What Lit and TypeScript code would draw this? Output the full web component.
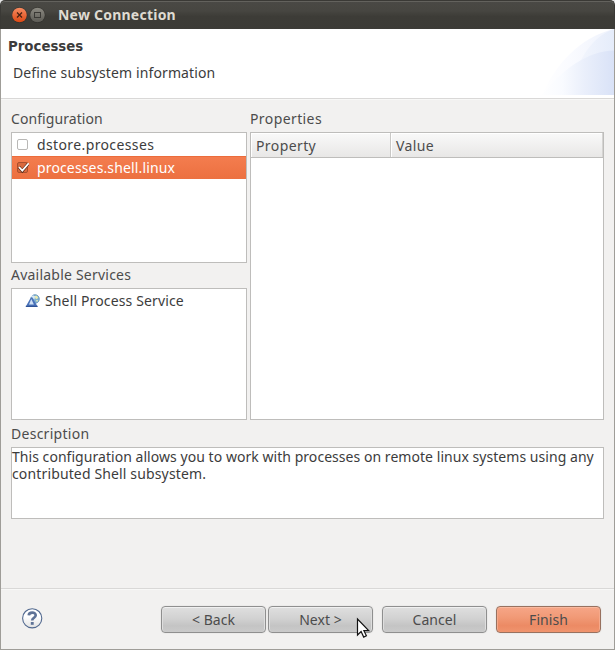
import { LitElement, html, css, svg } from "lit";
import { customElement, property } from "lit/decorators.js";
import { classMap } from "lit/directives/class-map.js";

@customElement("title-bar")
class TitleBar extends LitElement {
  static styles = css`
    :host { display: flex; align-items: center; height: 29px; box-sizing: border-box; padding-left: 11px;
      border-radius: 5px 5px 0 0; border: 1px solid #3a3935; border-bottom: 0;
      box-shadow: inset 0 1px #63625d;
      background: linear-gradient(#4a4945 0, #474641 35%, #3d3c37 55%, #3c3b37 100%); }
    svg { display: block; margin-right: 2px; }
    .title { margin-left: 10px; color: #dfdbd2; font: bold 14px/20px "Noto Sans", sans-serif; letter-spacing: 0.23px; white-space: nowrap; }
  `;
  render() {
    return html`
      <svg width="16" height="17" viewBox="0 0 16 17">
        <defs><linearGradient id="c" x2="0" y2="1"><stop stop-color="#f68b61" /><stop offset="1" stop-color="#dd4814" /></linearGradient></defs>
        <circle cx="7.5" cy="8.2" r="7.9" fill="#33322e" />
        <circle cx="7.5" cy="8" r="7.3" fill="url(#c)" />
        <path d="M5 5.5l5 5m0-5l-5 5" stroke="#492112" stroke-width="1.3" />
      </svg>
      <svg width="16" height="17" viewBox="0 0 16 17">
        <defs><linearGradient id="m" x2="0" y2="1"><stop stop-color="#8b8981" /><stop offset="1" stop-color="#5c5b55" /></linearGradient></defs>
        <circle cx="7.5" cy="8.2" r="7.9" fill="#33322e" />
        <circle cx="7.5" cy="8" r="7.3" fill="url(#m)" />
        <rect x="4.5" y="5.5" width="6" height="5" fill="none" stroke="#3a3935" />
      </svg>
      <span class="title">New Connection</span>`;
  }
}

@customElement("dialog-button")
class DialogButton extends LitElement {
  @property() label = "";
  @property({ type: Boolean }) primary = false;
  static styles = css`
    :host { display: block; width: 105px; height: 27px; }
    .face { box-sizing: border-box; width: 105px; height: 27px; border: 1px solid #8f8f8f; border-radius: 4px;
      display: flex; align-items: center; justify-content: center;
      font: 14px/20px "Noto Sans", sans-serif; color: #4c4c4c; white-space: nowrap; letter-spacing: .06px;
      background: linear-gradient(#dfdfdf, #d2d2d2 45%, #c4c4c4 75%, #cacaca);
      box-shadow: inset 0 1px #f0f0f0, inset 1px 0 #dedede, inset -1px 0 #dedede, 0 0 0 1px rgba(0,0,0,.025); }
    .primary { border-color: #98715f;
      background: linear-gradient(#f6a687, #f19a77 40%, #ec8a64 75%, #f0946e);
      box-shadow: inset 0 1px #fab99f, inset 1px 0 #f5a98b, inset -1px 0 #f5a98b, 0 0 0 1px rgba(0,0,0,.025); }
  `;
  render() {
    return html`<div class=${classMap({ face: true, primary: this.primary })}>${this.label}</div>`;
  }
}

const serviceIcon = svg`
  <circle cx="10" cy="5" r="4.3" fill="#7fb0d0" stroke="#5d8fb8" stroke-width=".8" />
  <path d="M9 2l3-.3 1.3 2.3-2.3 1.3zM11 6l2.2.3-1.2 2z" fill="#e9ebb0" />
  <path d="M5.5 2.5l2.5-1.3 2 1.4-.5 3z" fill="#d7e9f7" />
  <path d="M.8 12.6L5 5l2-2 2 3.5 3.6 6.1z" fill="#4a72b8" />
  <path d="M4 10.5L6.3 5l2.6 5.5z" fill="#cfe0f5" />
  <path d="M.8 12.4h11.8" stroke="#2f5296" stroke-width="1.2" />`;

@customElement("app-root")
class AppRoot extends LitElement {
  static styles = css`
    :host { display: block; width: 615px; height: 650px; position: relative; background: #e6e6e6; overflow: hidden;
      font: 14px/17px "Noto Sans", sans-serif; color: #3c3c3c; white-space: nowrap; }
    .window { display: flex; flex-direction: column; height: 650px; }
    .body { flex: 1; display: flex; flex-direction: column; border: 1px solid #9f9d98; border-top: 0; background: #f2f1f0; }
    .head { position: relative; height: 70px; box-sizing: border-box; background: #fff; border-bottom: 1px solid #d9d8d7; padding: 9px 0 0 7px; }
    .head h1 { margin: 0; font: bold 13.33px/17px "DejaVu Sans", sans-serif; }
    .head p { margin: 9px 0 0 5px; line-height: 17px; letter-spacing: .12px; }
    .swoosh { position: absolute; right: 0; top: 0; }
    .main { height: 490px; box-sizing: border-box; padding: 11px 10px 0; color: #4c4c4c;
      border-top: 1px solid #f8f8f7; border-bottom: 1px solid #d9d8d7; }
    .cols { display: flex; gap: 3px; }
    .left { width: 236px; }
    .right { width: 354px; }
    .label { height: 17px; margin-bottom: 4px; line-height: 16px; }
    .box { box-sizing: border-box; border: 1px solid #bebdbb; background: #fff; color: #3c3c3c; }
    .config { height: 131px; margin-bottom: 4px; }
    .services { height: 132px; }
    .props { height: 288px; }
    .row { display: flex; align-items: center; height: 23px; padding-left: 5px; gap: 8px; }
    .selected { color: #fff; background: linear-gradient(#f47d4f, #ec7040); box-shadow: inset 0 1px #ec6c3b; }
    .row svg, .service svg { display: block; flex: none; }
    .service { display: flex; align-items: center; height: 23px; padding-left: 13px; gap: 5px; }
    .cells { display: flex; height: 24px; border-bottom: 1px solid #bebdbb; color: #4c4c4c; line-height: 25px; background: linear-gradient(#f9f9f9, #e8e7e6); }
    .cell { padding-left: 5px; box-sizing: border-box; box-shadow: inset 1px 1px #fff; }
    .c1 { width: 140px; border-right: 1px solid #c9c8c6; }
    .c2 { flex: 1; border-right: 1px solid #d5d4d2; }
    .t-conf { letter-spacing: .08px; }
    .t-row { letter-spacing: .38px; }
    .t-row-selected, .t-service { letter-spacing: .14px; }
    .t-available { letter-spacing: .22px; }
    .t-props { letter-spacing: .4px; }
    .t-desc { letter-spacing: .27px; }
    .desc-label { margin: 6px 0 4px; }
    .desc { height: 72px; width: 593px; white-space: normal; letter-spacing: .14px; }
    .desc::first-line { letter-spacing: .045px; }
    .foot { flex: 1; display: flex; padding: 16px 0 0 21px; border-top: 1px solid #f8f8f7; }
    .help { display: block; margin: 2px 118px 0 0; }
    .next { margin-left: 2px; }
    .cancel { margin-left: 9px; }
    .finish { margin-left: 9px; }
    .cursor { position: absolute; left: 356px; top: 617px; }
  `;
  render() {
    return html`
      <div class="window">
        <title-bar></title-bar>
        <div class="body">
          <div class="head">
            <h1>Processes</h1>
            <p>Define subsystem information</p>
            <svg class="swoosh" width="74" height="66" viewBox="0 0 74 66">
              <defs>
                <linearGradient id="a" gradientUnits="userSpaceOnUse" x1="0" x2="74" y1="0" y2="0"><stop stop-color="#fff" /><stop offset=".4" stop-color="#fafbff" /><stop offset="1" stop-color="#eef2fc" /></linearGradient>
                <linearGradient id="b" gradientUnits="userSpaceOnUse" x1="30" x2="74" y1="0" y2="0"><stop stop-color="#f6f8fe" /><stop offset="1" stop-color="#e5ecfa" /></linearGradient>
                <linearGradient id="d" gradientUnits="userSpaceOnUse" x1="0" x2="74" y1="0" y2="0"><stop stop-color="#fff" /><stop offset=".3" stop-color="#f9fbff" /><stop offset=".6" stop-color="#eaeffb" /><stop offset="1" stop-color="#d9e2f7" /></linearGradient>
              </defs>
              <path d="M2 66C15 36 40 8 74 0v66z" fill="url(#a)" />
              <path d="M31 66C34 36 50 8 74 0v66z" fill="url(#b)" />
              <path d="M2 66C22 40 48 22 74 21.5v44.5z" fill="url(#d)" />
            </svg>
          </div>
          <div class="main">
            <div class="cols">
              <div class="left">
                <div class="label t-conf">Configuration</div>
                <div class="box config">
                  <div class="row">
                    <svg width="12" height="12" viewBox="0 0 12 12"><rect x=".5" y=".5" width="10" height="10" rx="1.5" fill="#fff" stroke="#b9b8b6" /></svg>
                    <span class="t-row">dstore.processes</span>
                  </div>
                  <div class="row selected">
                    <svg width="12" height="12" viewBox="0 0 12 12"><rect x=".5" y=".5" width="10" height="10" rx="1.5" fill="#d9683d" stroke="#a8502f" /><path d="M2 5l3.3 4L11.5 1.5" fill="none" stroke="#5a2a18" stroke-width="3" /><path d="M2 5l3.3 3.7L11.7 1.3" fill="none" stroke="#fff" stroke-width="1.8" /></svg>
                    <span class="t-row-selected">processes.shell.linux</span>
                  </div>
                </div>
                <div class="label t-available">Available Services</div>
                <div class="box services">
                  <div class="service"><svg width="15" height="14" viewBox="0 0 15 14">${serviceIcon}</svg><span class="t-service">Shell Process Service</span></div>
                </div>
              </div>
              <div class="right">
                <div class="label t-props">Properties</div>
                <div class="box props">
                  <div class="cells t-props">
                    <div class="cell c1">Property</div>
                    <div class="cell c2">Value</div>
                  </div>
                </div>
              </div>
            </div>
            <div class="label desc-label t-desc">Description</div>
            <div class="box desc">This configuration allows you to work with processes on remote linux systems using any contributed Shell subsystem.</div>
          </div>
          <div class="foot">
            <svg class="help" width="21" height="21" viewBox="0 0 21 21">
              <defs><linearGradient id="h" x2="0" y2="1"><stop offset=".4" stop-color="#fff" /><stop offset="1" stop-color="#e2e2e2" /></linearGradient></defs>
              <circle cx="10.2" cy="10.3" r="9.6" fill="url(#h)" stroke="#52698f" stroke-width="1.1" />
              <path d="M6.8 7.4C6.9 3.6 13.8 3.6 13.7 7.3c0 2.5-3.5 2.5-3.5 5.2" fill="none" stroke="#5f7397" stroke-width="2.7" />
              <rect x="8.8" y="14" width="2.9" height="2.8" fill="#5f7397" />
            </svg>
            <dialog-button label="&lt; Back"></dialog-button>
            <dialog-button class="next" label="Next &gt;"></dialog-button>
            <dialog-button class="cancel" label="Cancel"></dialog-button>
            <dialog-button class="finish" label="Finish" primary></dialog-button>
          </div>
        </div>
      </div>
      <svg class="cursor" width="15" height="23" viewBox="0 0 15 23">
        <path d="M1.5 2v16l3.6-3.4 2.6 5.5 2.7-1.3-2.5-5.1h4.8z" fill="#fff" stroke="#111" stroke-width="1.2" />
      </svg>`;
  }
}
